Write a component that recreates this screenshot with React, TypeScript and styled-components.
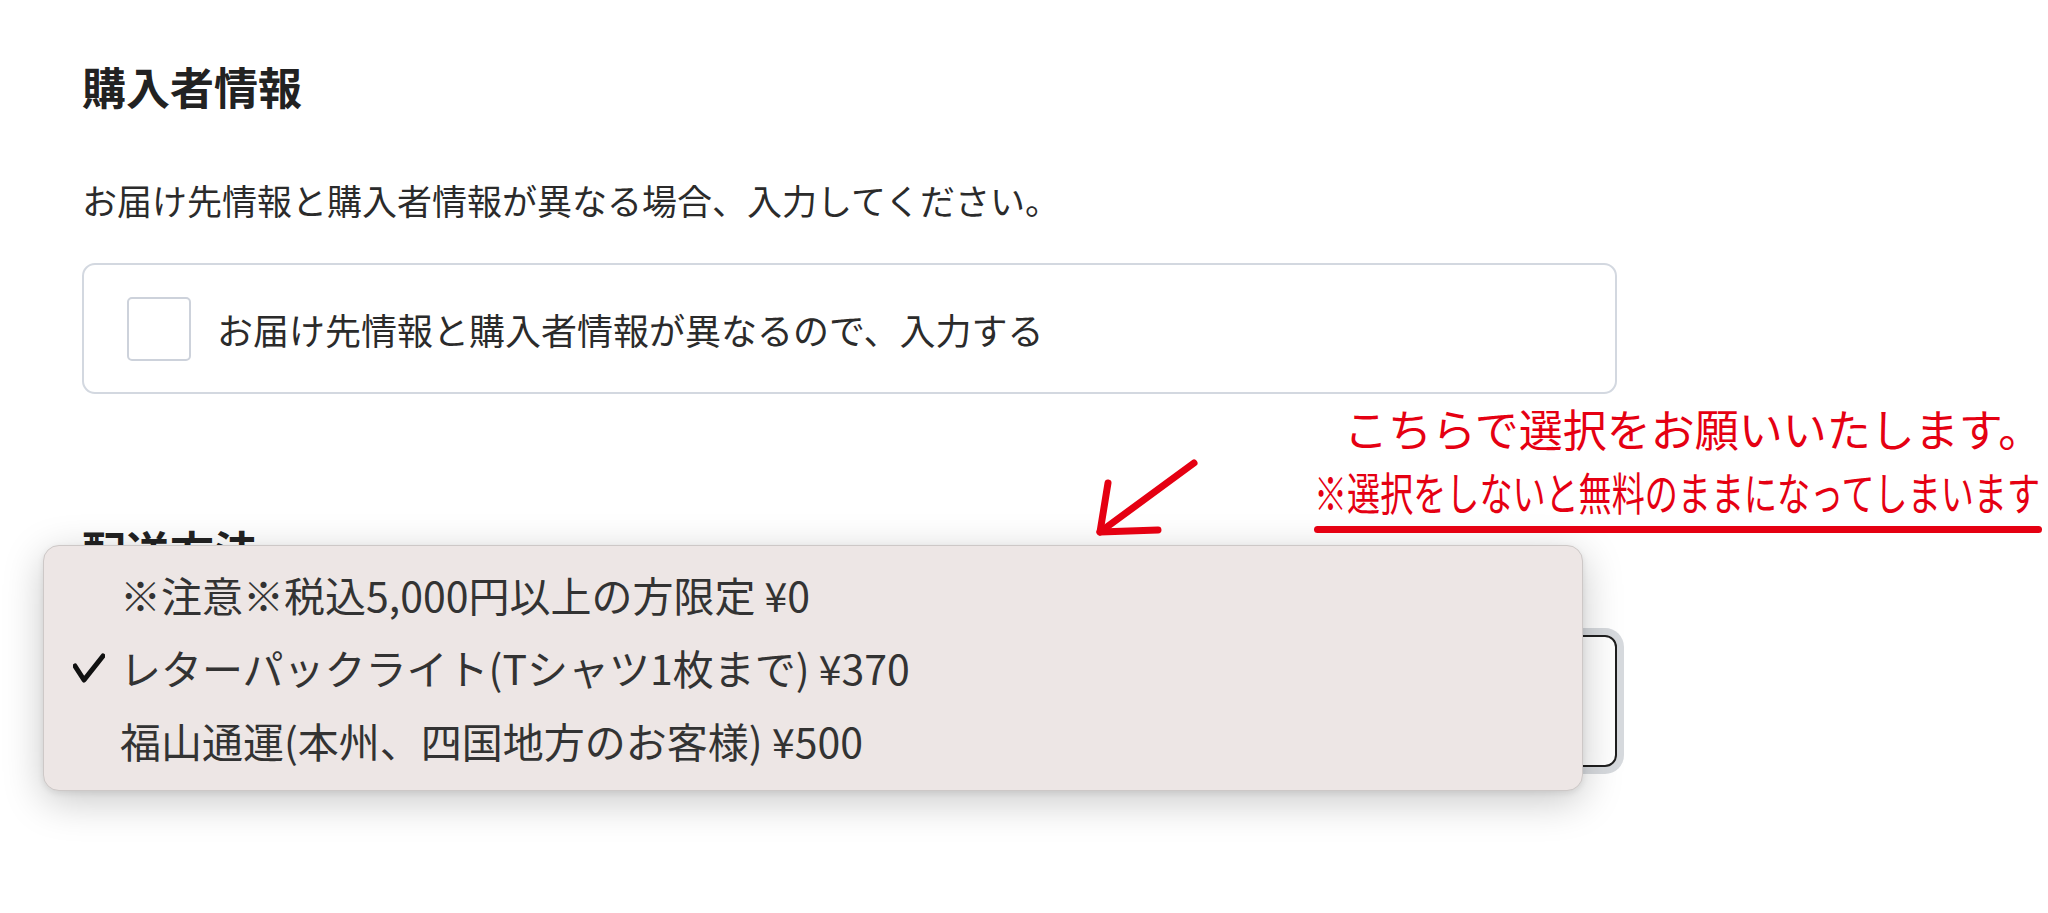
import React from 'react';
import styled, { createGlobalStyle } from 'styled-components';

const RED = '#e50012';

const GlobalStyle = createGlobalStyle`
  html, body {
    margin: 0;
    padding: 0;
    background: #fff;
    overflow: hidden;
  }
  body {
    font-family: "Noto Sans CJK JP", "Noto Sans", sans-serif;
    color: #2b2b2b;
  }
`;

const Page = styled.div`
  position: relative;
  width: 2048px;
  height: 913px;
  box-sizing: border-box;
  padding: 60px 0 0 82px;
`;

const Column = styled.div`
  width: 1535px;
`;

const SectionTitle = styled.h2`
  margin: 0;
  font-size: 44px;
  line-height: 52px;
  font-weight: 700;
  color: #222;
`;

const Lead = styled.p`
  margin: 64px 0 0;
  font-size: 35px;
  line-height: 48px;
  color: #2b2b2b;
`;

const OptionCard = styled.label`
  margin-top: 39px;
  height: 131px;
  box-sizing: border-box;
  border: 2px solid #d3d8e0;
  border-radius: 13px;
  display: flex;
  align-items: center;
  gap: 26px;
  padding-left: 43px;
`;

const CheckBox = styled.span`
  width: 64px;
  height: 64px;
  box-sizing: border-box;
  border: 2px solid #cdd2db;
  border-radius: 5px;
  background: #fff;
  flex-shrink: 0;
`;

const OptionText = styled.span`
  font-size: 36px;
  line-height: 1;
  color: #2b2b2b;
`;

const Shipping = styled.section`
  position: relative;
  margin-top: 130px;
`;

const SelectBox = styled.div`
  margin-top: 59px;
  height: 132px;
  box-sizing: border-box;
  border: 2px solid #1f1f1f;
  border-radius: 12px;
  box-shadow: 0 0 0 7px #d7dade;
  display: flex;
  align-items: center;
  padding-left: 36px;
  font-size: 40px;
  color: #333;
`;

const Menu = styled.ul`
  position: absolute;
  left: -39px;
  top: 21px;
  width: 1540px;
  height: 246px;
  box-sizing: border-box;
  margin: 0;
  padding: 12px 0 15px;
  list-style: none;
  background: #ede6e5;
  border: 1px solid #cdc8c7;
  border-radius: 16px;
  box-shadow: 0 10px 40px rgba(0, 0, 0, 0.22), 0 2px 6px rgba(0, 0, 0, 0.08);
`;

const MenuItem = styled.li`
  display: flex;
  align-items: center;
  height: 73px;
  font-size: 41px;
  line-height: 73px;
  color: #333;
  white-space: nowrap;
`;

const CheckSlot = styled.span`
  width: 76px;
  box-sizing: border-box;
  padding-left: 29px;
  display: flex;
  align-items: center;
`;

const Callout = styled.div`
  position: absolute;
  left: 1314px;
  top: 403px;
  width: 728px;
  display: flex;
  flex-direction: column;
  color: ${RED};
`;

const CalloutTitle = styled.div`
  font-size: 44px;
  line-height: 50px;
  padding-left: 30px;
  text-align: center;
  white-space: nowrap;
`;

const CalloutNote = styled.div`
  margin-top: 13px;
  font-size: 45px;
  line-height: 52px;
  white-space: nowrap;
  transform: scaleX(0.735);
  transform-origin: left center;
`;

const Underline = styled.div`
  margin-top: 8px;
  height: 7px;
  border-radius: 4px;
  background: ${RED};
`;

const Arrow = styled.svg`
  position: absolute;
  left: 1092px;
  top: 455px;
`;

const Check = () => (
  <svg width="32" height="30" viewBox="0 0 32 30">
    <path d="M2 13 L11 27 L30 3" fill="none" stroke="#111" strokeWidth="5" strokeLinecap="round" strokeLinejoin="round" />
  </svg>
);

const options = [
  { label: '※注意※税込5,000円以上の方限定 ¥0', checked: false },
  { label: 'レターパックライト(Tシャツ1枚まで) ¥370', checked: true },
  { label: '福山通運(本州、四国地方のお客様) ¥500', checked: false },
];

export default function App() {
  return (
    <Page>
      <GlobalStyle />
      <Column>
        <SectionTitle>購入者情報</SectionTitle>
        <Lead>お届け先情報と購入者情報が異なる場合、入力してください。</Lead>
        <OptionCard>
          <CheckBox />
          <OptionText>お届け先情報と購入者情報が異なるので、入力する</OptionText>
        </OptionCard>

        <Shipping>
          <SectionTitle>配送方法</SectionTitle>
          <SelectBox>レターパックライト(Tシャツ1枚まで) ¥370</SelectBox>
          <Menu>
            {options.map((o) => (
              <MenuItem key={o.label}>
                <CheckSlot>{o.checked && <Check />}</CheckSlot>
                {o.label}
              </MenuItem>
            ))}
          </Menu>
        </Shipping>
      </Column>

      <Arrow width="110" height="90" viewBox="0 0 110 90">
        <g fill="none" stroke={RED} strokeWidth="7" strokeLinecap="round" strokeLinejoin="round">
          <path d="M102 8 L8 77" />
          <path d="M16 28 L8 77 L66 75" />
        </g>
      </Arrow>

      <Callout>
        <CalloutTitle>こちらで選択をお願いいたします。</CalloutTitle>
        <CalloutNote>※選択をしないと無料のままになってしまいます</CalloutNote>
        <Underline />
      </Callout>
    </Page>
  );
}
